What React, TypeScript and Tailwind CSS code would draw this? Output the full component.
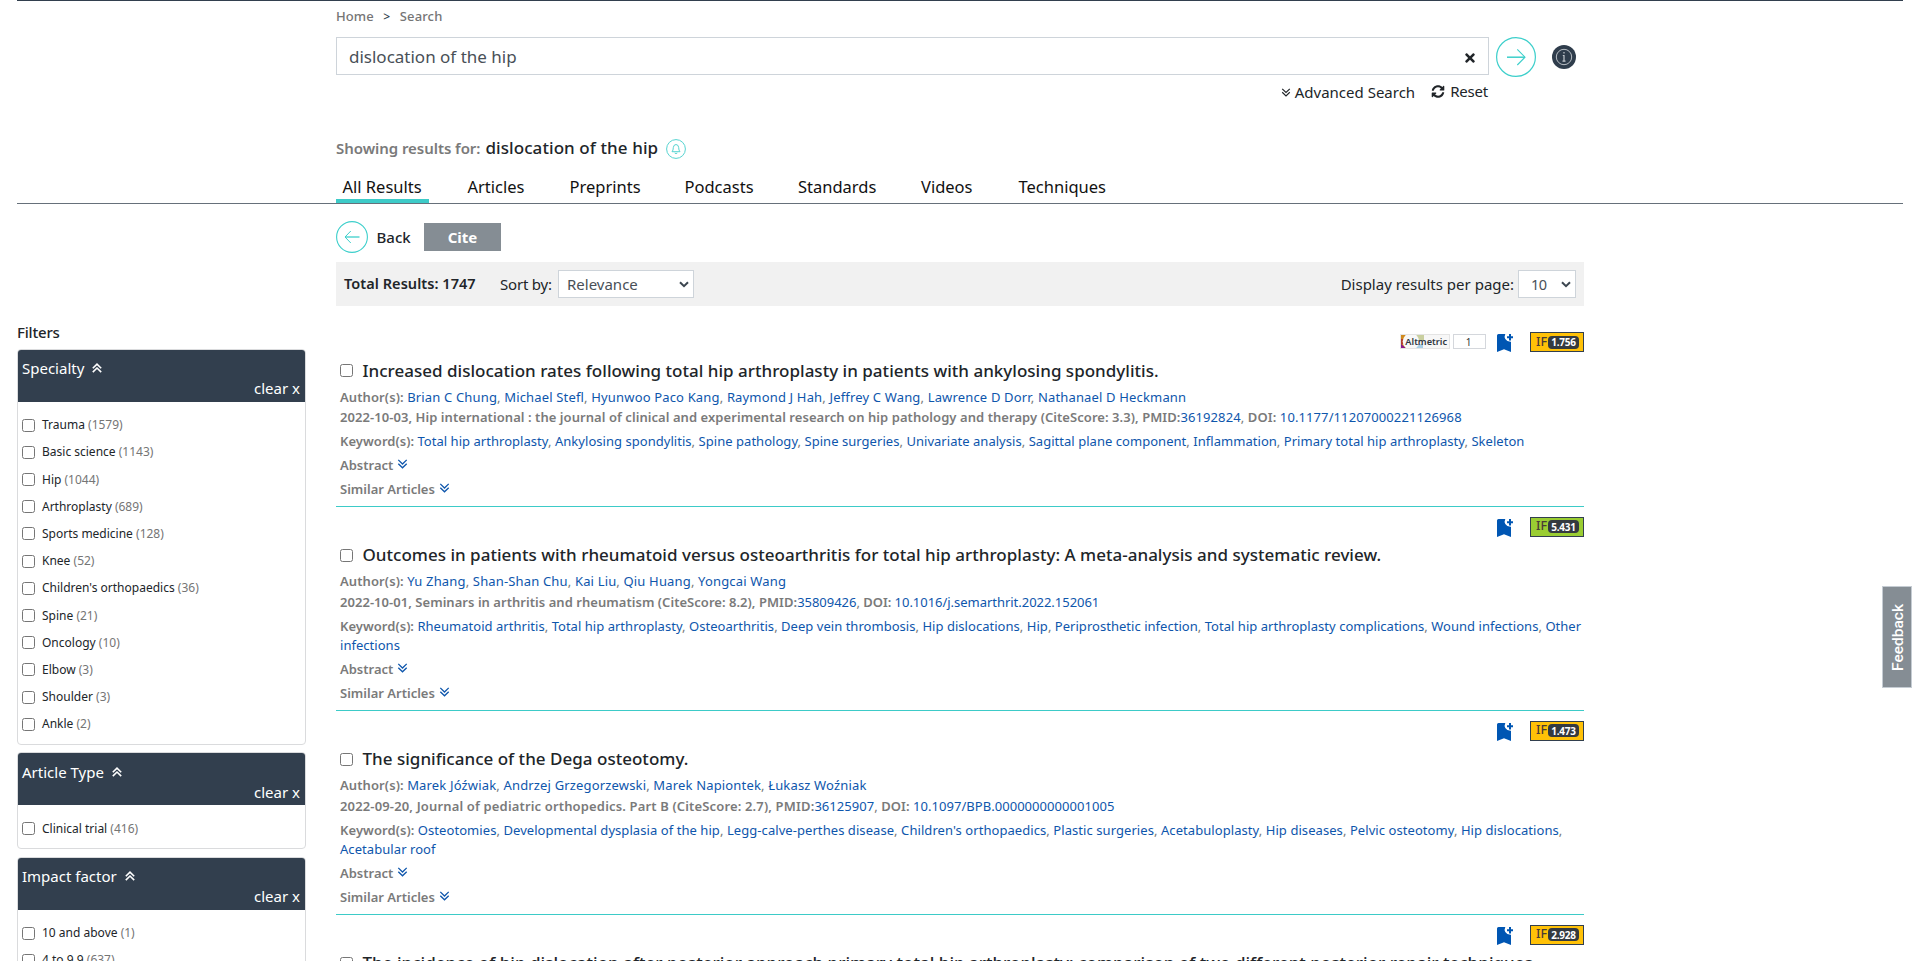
import React from "react";
import { FaSyncAlt, FaTimes } from "react-icons/fa";

type Article = {
  title: string;
  authors: string[];
  publication: string;
  pmid: string;
  doi: string;
  keywords: string[];
  impact: string;
  badge: string;
  altmetric?: number;
  pubTracking?: string;
  doiTracking?: string;
  keywordTracking?: string;
};

const articles: Article[] = [
  {
    title: "Increased dislocation rates following total hip arthroplasty in patients with ankylosing spondylitis.",
    authors: ["Brian C Chung", "Michael Stefl", "Hyunwoo Paco Kang", "Raymond J Hah", "Jeffrey C Wang", "Lawrence D Dorr", "Nathanael D Heckmann"],
    publication:
      "2022-10-03, Hip international : the journal of clinical and experimental research on hip pathology and therapy (CiteScore: 3.3), PMID:",
    pmid: "36192824",
    doi: "10.1177/11207000221126968",
    keywords: ["Total hip arthroplasty", "Ankylosing spondylitis", "Spine pathology", "Spine surgeries", "Univariate analysis", "Sagittal plane component", "Inflammation", "Primary total hip arthroplasty", "Skeleton"],
    impact: "1.756",
    badge: "bg-[#ffc107]",
    altmetric: 1,
    pubTracking: "tracking-[0.06px]",
    doiTracking: "tracking-[0.1px]",
    keywordTracking: "tracking-[0.037px]",
  },
  {
    title: "Outcomes in patients with rheumatoid versus osteoarthritis for total hip arthroplasty: A meta-analysis and systematic review.",
    authors: ["Yu Zhang", "Shan-Shan Chu", "Kai Liu", "Qiu Huang", "Yongcai Wang"],
    publication: "2022-10-01, Seminars in arthritis and rheumatism (CiteScore: 8.2), PMID:",
    pmid: "35809426",
    doi: "10.1016/j.semarthrit.2022.152061",
    keywords: ["Rheumatoid arthritis", "Total hip arthroplasty", "Osteoarthritis", "Deep vein thrombosis", "Hip dislocations", "Hip", "Periprosthetic infection", "Total hip arthroplasty complications", "Wound infections", "Other infections"],
    impact: "5.431",
    badge: "bg-[#9acd32]",
    pubTracking: "tracking-[0.04px]",
    doiTracking: "tracking-[-0.03px]",
    keywordTracking: "tracking-[0.033px]",
  },
  {
    title: "The significance of the Dega osteotomy.",
    authors: ["Marek Jóźwiak", "Andrzej Grzegorzewski", "Marek Napiontek", "Łukasz Woźniak"],
    publication: "2022-09-20, Journal of pediatric orthopedics. Part B (CiteScore: 2.7), PMID:",
    pmid: "36125907",
    doi: "10.1097/BPB.0000000000001005",
    keywords: ["Osteotomies", "Developmental dysplasia of the hip", "Legg-calve-perthes disease", "Children's orthopaedics", "Plastic surgeries", "Acetabuloplasty", "Hip diseases", "Pelvic osteotomy", "Hip dislocations", "Acetabular roof"],
    impact: "1.473",
    badge: "bg-[#ffc107]",
    pubTracking: "tracking-[0.155px]",
    doiTracking: "tracking-[0.05px]",
    keywordTracking: "tracking-[0.066px]",
  },
  {
    title:
      "The incidence of hip dislocation after posterior approach primary total hip arthroplasty: comparison of two different posterior repair techniques.",
    authors: [],
    publication: "",
    pmid: "",
    doi: "",
    keywords: [],
    impact: "2.928",
    badge: "bg-[#ffc107]",
  },
];

const filters: { name: string; items: [string, number][] }[] = [
  {
    name: "Specialty",
    items: [
      ["Trauma", 1579],
      ["Basic science", 1143],
      ["Hip", 1044],
      ["Arthroplasty", 689],
      ["Sports medicine", 128],
      ["Knee", 52],
      ["Children's orthopaedics", 36],
      ["Spine", 21],
      ["Oncology", 10],
      ["Elbow", 3],
      ["Shoulder", 3],
      ["Ankle", 2],
    ],
  },
  { name: "Article Type", items: [["Clinical trial", 416]] },
  {
    name: "Impact factor",
    items: [
      ["10 and above", 1],
      ["4 to 9.9", 637],
    ],
  },
];

const tabs = [
  { label: "All Results", width: "w-[125px]" },
  { label: "Articles", width: "w-[102px]" },
  { label: "Preprints", width: "w-[115px]" },
  { label: "Podcasts", width: "w-[113.5px]" },
  { label: "Standards", width: "w-[123px]" },
  { label: "Videos", width: "w-[97.5px]" },
  { label: "Techniques", width: "w-[99px]" },
];

function DoubleChevron({ className = "", up = false }: { className?: string; up?: boolean }) {
  return (
    <svg viewBox="0 0 10 10" className={`shrink-0 ${up ? "rotate-180" : ""} ${className}`} fill="none" stroke="currentColor">
      <path d="M.8 .9 5 5 9.2 .9M.8 4.7 5 8.8 9.2 4.7" />
    </svg>
  );
}

function SelectArrow() {
  return (
    <svg viewBox="0 0 10 7" className="h-[7px] w-[10px]" fill="none" stroke="#3c4650" strokeWidth="2">
      <path d="M1 1.2 5 5.2 9 1.2" />
    </svg>
  );
}

function BookmarkPlus() {
  return (
    <svg viewBox="0 0 16 18" className="h-[18px] w-[16px]">
      <path fill="#0056b3" d="M0 1.5Q0 0 1.5 0H8.3Q7 2.600 8.300 5 10.200 8 14 7.800V18L7 15.2 0 18Z" />
      <path fill="#0056b3" d="M12 0h2v2.200h2v2H14v2.200h-2V4.200H10v-2H12Z" />
    </svg>
  );
}

function Altmetric({ score }: { score: number }) {
  return (
    <div className="mt-0.5 flex h-[15px] gap-[3px]">
      <div className="relative flex w-[50px] items-center justify-end overflow-hidden border border-[#e4e4e4] bg-[#f7f7f7] pr-[2px]">
        <svg viewBox="0 0 50 15" className="absolute -top-px -left-px h-[15px] w-[50px]">
          <path fill="#d08a1e" d="M0 0H10V15H0Z" />
          <path fill="#b5402c" d="M0 5H4V10H0Z" />
          <path fill="#8b1a86" d="M0 9 7 15H0Z" />
          <path fill="#c9cf9f" d="M10 0H24V7H10Z" />
          <path fill="#a9cfe6" d="M14 10H23V15H14Z" />
          <circle cx="11" cy="7.500" r="8.300" fill="#f8f8f8" />
        </svg>
        <span className="relative text-[9.2px] leading-none font-semibold text-[#2f3640]">Altmetric</span>
      </div>
      <div className="flex w-[33px] items-center justify-center border border-[#d4d7dc] pr-0.5 text-[10px] leading-none text-[#333]">{score}</div>
    </div>
  );
}

function Links({ items }: { items: string[] }) {
  return (
    <>
      {items.map((item, i) => (
        <React.Fragment key={item}>
          <a className="text-[#0e56ac]">{item}</a>
          {i < items.length - 1 ? ", " : ""}
        </React.Fragment>
      ))}
    </>
  );
}

function ArticleRow({ a }: { a: Article }) {
  return (
    <article className="border-b border-[#3dcbc8] pt-[10px] pb-[6px] text-[13px] text-[#7a7a7a]">
      <div className="flex h-5 justify-end">
        {a.altmetric ? <Altmetric score={a.altmetric} /> : null}
        <div className="mt-0.5 ml-[11px]">
          <BookmarkPlus />
        </div>
        <div className={`ml-[17px] flex h-5 w-[54px] items-center border border-[#323f4e] pl-[5px] ${a.badge}`}>
          <span className="w-[12px] text-[12.5px] leading-none font-medium text-[#4a3b35]">IF</span>
          <span className="flex h-[13px] w-[31px] items-center justify-center rounded-[4px] bg-[#343a40] text-[10px] leading-none font-bold tracking-[-0.2px] text-white">
            {a.impact}
          </span>
        </div>
      </div>
      <div className="mt-[6.5px] flex h-6 items-start pl-[4px]">
        <input type="checkbox" className="mt-[5.5px] h-[13px] w-[13px]" />
        <h2 className="ml-[9.5px] text-[17px] leading-6 font-medium tracking-[0.015px] whitespace-nowrap text-[#212529]">{a.title}</h2>
      </div>
      {a.authors.length > 0 && (
        <div className="pl-[4px]">
          <p className="mt-1 leading-5 tracking-[0.16px]">
            <span className="font-semibold tracking-[0.1px]">Author(s): </span>
            <Links items={a.authors} />
          </p>
          <p className={`mt-[0.5px] leading-5 whitespace-nowrap ${a.doiTracking}`}>
            <span className={`font-semibold ${a.pubTracking}`}>{a.publication}</span>
            <a className="text-[#0e56ac]">{a.pmid}</a>, <span className="font-semibold">DOI: </span>
            <a className="text-[#0e56ac]">{a.doi}</a>
          </p>
          <p className={`mt-[5px] leading-[19.5px] ${a.keywordTracking}`}>
            <span className="font-semibold">Keyword(s): </span>
            <Links items={a.keywords} />
          </p>
          <div className="mt-1 flex h-5 items-center font-semibold">
            Abstract
            <DoubleChevron className="mb-1 ml-1 h-[10px] w-[11px] stroke-[1.3] text-[#0e56ac]" />
          </div>
          <div className="mt-1 flex h-5 items-center font-semibold">
            Similar Articles
            <DoubleChevron className="mb-1 ml-1 h-[10px] w-[11px] stroke-[1.3] text-[#0e56ac]" />
          </div>
        </div>
      )}
    </article>
  );
}

function FilterCard({ name, items }: { name: string; items: [string, number][] }) {
  return (
    <section className="mb-[7.6px] w-[289px] overflow-hidden rounded-[4px] border border-[#dadbdd]">
      <header className="h-[52px] bg-[#323f4e] pt-[8.4px] pr-[5px] pl-[4px] text-[15px] text-white">
        <div className="flex h-5 items-center leading-5">
          {name}
          <DoubleChevron up className="ml-2 h-[10px] w-[10px] stroke-[1.6]" />
        </div>
        <div className="text-right leading-5">clear x</div>
      </header>
      <div className="pt-[9.6px] pb-[6px]">
        {items.map(([label, count]) => (
          <label key={label} className="flex h-[27.2px] items-center pl-[4px] text-[12px] text-[#212529]">
            <input type="checkbox" className="h-[13px] w-[13px]" />
            <span className="ml-[7px]">
              {label} <span className="text-[#757575]">({count})</span>
            </span>
          </label>
        ))}
      </div>
    </section>
  );
}

export default function App() {
  return (
    <div className="relative h-[961px] w-[1920px] overflow-hidden bg-white px-[17px] font-['Noto_Sans',sans-serif] text-[#212529]">
      <header className="h-[204px] border-t border-b border-t-[#323f4e] border-b-[#66707a] pt-[6px] pl-[319px]">
        <nav className="flex h-5 items-center text-[13px] font-medium text-[#757575]">
          <span className="tracking-[0.1px]">Home</span>
          <span className="mx-[9.5px] text-[12px] text-[#323f4e]">&gt;</span>
          <span className="tracking-[0.15px]">Search</span>
        </nav>
        <div className="mt-[10px] flex items-start">
          <div className="flex h-[38px] w-[1153px] items-center justify-between border border-[#ced4da] pr-[11px] pl-[12px] text-[17px] text-[#495057]">
            <span className="mt-px">dislocation of the hip</span>
            <FaTimes className="mt-[3px] h-[14px] w-[14px] text-[#212529]" />
          </div>
          <svg viewBox="0 0 40 40" className="ml-[7px] h-10 w-10" fill="none" stroke="#3dcfcb">
            <circle cx="20" cy="20" r="19.400" strokeWidth="1.200" />
            <path strokeWidth="1.500" d="M11 20.200H29" />
            <path strokeWidth="1.100" d="M21.300 12.300 29 20.200 21.300 28" />
          </svg>
          <svg viewBox="0 0 24 24" className="mt-2 ml-4 h-6 w-6" fill="none">
            <circle cx="12" cy="12" r="12" fill="#2f3d4c" />
            <circle cx="12" cy="12" r="7.700" stroke="#b9bfc5" strokeWidth="1" />
            <path d="M12 7v1.600M10.800 10.500H12V16M10.500 16.200h3" stroke="#c3c8cd" strokeWidth="1.200" />
          </svg>
        </div>
        <div className="mt-[5px] flex h-5 w-[1152px] items-center justify-end text-[15px] leading-5">
          <DoubleChevron className="mr-1 h-[9px] w-[10px] stroke-[1.3]" />
          <span>Advanced Search</span>
          <FaSyncAlt className="mr-[5px] mb-0.5 ml-[16px] h-[13px] w-[14px]" />
          <span className="mb-0.5 tracking-[-0.2px]">Reset</span>
        </div>
        <div className="mt-[33px] flex h-6 items-center">
          <span className="mt-px text-[15px] leading-6 font-semibold tracking-[-0.05px] text-[#7a7a7a]">Showing results for:</span>
          <span className="mt-px ml-[5px] text-[17px] leading-6 font-medium tracking-[0.08px]">dislocation of the hip</span>
          <svg viewBox="0 0 20 20" className="mt-1 ml-[8px] h-5 w-5" fill="none" stroke="#55d3d0">
            <circle cx="10" cy="10" r="9.400" />
            <path d="M6 12.700Q7.300 11.500 7.300 8.600 7.500 5.700 10 5.500 12.500 5.700 12.700 8.600 12.700 11.500 14 12.700ZM8.700 14Q10 15.200 11.300 14" />
          </svg>
        </div>
        <nav className="mt-[15px] flex h-[29px] text-[16.5px] leading-[25px] text-[#111]">
          {tabs.map((tab, i) => (
            <div key={tab.label} className={`relative shrink-0 pl-[6.5px] whitespace-nowrap ${tab.width}`}>
              {tab.label}
              {i === 0 && <div className="absolute bottom-0 left-0 h-1 w-[93px] bg-[#3dcbc8]" />}
            </div>
          ))}
        </nav>
      </header>

      <div className="flex">
        <aside className="w-[319px] pt-[118px]">
          <h3 className="mb-[7px] text-[15px] leading-5 font-medium tracking-[-0.2px]">Filters</h3>
          {filters.map((f) => (
            <FilterCard key={f.name} {...f} />
          ))}
        </aside>

        <main className="w-[1248px] pt-[17px]">
          <div className="flex h-8 items-center">
            <svg viewBox="0 0 32 32" className="h-8 w-8" fill="none" stroke="#3dcfcb">
              <circle cx="16" cy="16" r="15.400" strokeWidth="1.100" />
              <path strokeWidth="1.300" d="M9 16H23.500" />
              <path strokeWidth="1" d="M14.800 10 9 16 14.800 22" />
            </svg>
            <span className="ml-[8.5px] w-[47.5px] text-[15px] font-medium">Back</span>
            <button className="h-7 w-[77px] bg-[#858d94] text-[15px] font-bold text-white">Cite</button>
          </div>
          <div className="mt-[9px] mb-4 flex h-11 items-center bg-[#f1f1f1] pr-2 pl-[8px] text-[15px]">
            <span className="w-[156px] text-[14.5px] font-semibold tracking-[0.05px]">Total Results: 1747</span>
            <span className="w-[58px] tracking-[-0.2px]">Sort by:</span>
            <div className="flex h-7 w-[136px] items-center justify-between border border-[#ced4da] bg-white pr-[4px] pl-[8px] text-[#495057]">
              Relevance
              <SelectArrow />
            </div>
            <span className="ml-auto">Display results per page:</span>
            <div className="ml-[4px] flex h-7 w-[58px] items-center justify-between border border-[#ced4da] bg-white pr-[4px] pl-[12px] text-[14.5px] text-[#495057]">
              <span className="mt-0.5 tracking-[-0.6px]">10</span>
              <SelectArrow />
            </div>
          </div>
          {articles.map((a) => (
            <ArticleRow key={a.title} a={a} />
          ))}
        </main>
      </div>

      <div className="absolute top-[586px] left-[1882px] flex h-[102px] w-[30px] items-center justify-center border border-[#c5ccd3] bg-[#858d94] pl-[3px]">
        <span className="rotate-180 font-['Roboto',sans-serif] text-[15.5px] font-medium text-white [writing-mode:vertical-rl]">Feedback</span>
      </div>
    </div>
  );
}
